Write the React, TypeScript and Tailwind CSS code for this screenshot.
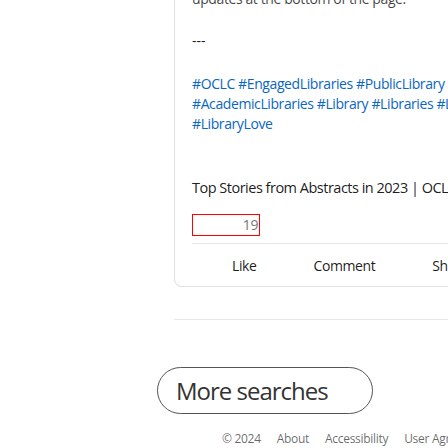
const hashtagLines = [
  "#OCLC #EngagedLibraries #PublicLibrary #Librarians",
  "#AcademicLibraries #Library #Libraries #LibraryLife",
  "#LibraryLove",
];

const footerLinks = ["© 2024", "About", "Accessibility", "User Agreement", "Privacy Policy"];

const App = () => {
  return (
    <div className="w-[448px] h-[448px] overflow-hidden bg-white font-['Open_Sans',sans-serif] text-[rgba(0,0,0,0.9)]">
      {/* post card, scrolled so its top is above the window */}
      <div className="ml-[174px] w-[600px] -mt-[11px] border-x border-b border-[#e0e0e0] rounded-b-lg">
        <div className="pl-[17px] pr-4 text-[14px] leading-[20px] tracking-[-0.4px]">
          <p className="whitespace-nowrap text-[rgba(0,0,0,0.75)]">updates at the bottom of the page.</p>
          <p className="mt-[22px] tracking-normal">---</p>
          <div className="mt-[23px] text-[#0a66c2]">
            {hashtagLines.map((line, i) => (
              <div key={i} className="whitespace-nowrap">
                {line}
              </div>
            ))}
          </div>
          <h3 className="mt-[42px] text-[14.5px] leading-[24px] tracking-[-0.5px] whitespace-nowrap">
            Top Stories from Abstracts in 2023 | OCLC
          </h3>
          <div className="mt-[14px] w-[68px] h-[22px] border border-[#ff0000] flex items-center justify-end pr-px text-[14px] text-[#777]">
            19
          </div>
          <div className="mt-[7px] border-t border-[#e6e6e6]" />
          <div className="flex gap-[57px] pl-[40px] pt-[12px] pb-[10px]">
            <span>Like</span>
            <span>Comment</span>
            <span>Share</span>
          </div>
        </div>
      </div>

      <div className="ml-[174px] mt-[32px] border-t border-[#e8e8e8]" />

      <button className="ml-[157px] mt-[47px] w-[216px] h-[47px] rounded-full border border-[#555] text-left pl-[18px] text-[24px] tracking-[-1px] text-[#333]">
        More searches
      </button>

      <ul className="ml-[222px] mt-[17px] flex gap-4 whitespace-nowrap text-[12px] leading-[16px] tracking-[-0.3px] text-[rgba(0,0,0,0.6)]">
        {footerLinks.map(link => (
          <li key={link}>{link}</li>
        ))}
      </ul>
    </div>
  );
};

export default App;
